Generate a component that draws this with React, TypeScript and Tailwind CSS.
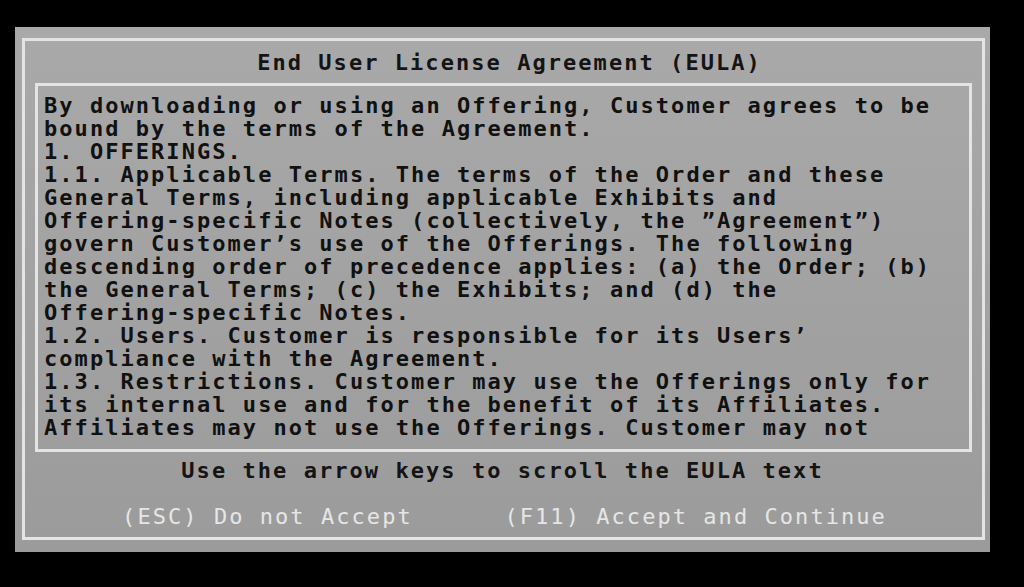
const LINES = [
  "By downloading or using an Offering, Customer agrees to be",
  "bound by the terms of the Agreement.",
  "1. OFFERINGS.",
  "1.1. Applicable Terms. The terms of the Order and these",
  "General Terms, including applicable Exhibits and",
  "Offering-specific Notes (collectively, the \u201dAgreement\u201d)",
  "govern Customer\u2019s use of the Offerings. The following",
  "descending order of precedence applies: (a) the Order; (b)",
  "the General Terms; (c) the Exhibits; and (d) the",
  "Offering-specific Notes.",
  "1.2. Users. Customer is responsible for its Users\u2019",
  "compliance with the Agreement.",
  "1.3. Restrictions. Customer may use the Offerings only for",
  "its internal use and for the benefit of its Affiliates.",
  "Affiliates may not use the Offerings. Customer may not",
];

export default function App() {
  return (
    <div
      className="w-[1024px] h-[587px] bg-black pt-[27px] pl-[15px] overflow-hidden text-[22px] leading-[23px] tracking-[2.05px]"
      style={{ fontFamily: '"DejaVu Sans Mono", "Liberation Mono", monospace' }}
    >
      {/* gray dialog panel */}
      <div className="w-[975px] h-[525px] bg-gradient-to-b from-[#a9a9a9] to-[#9b9b9b] pt-[11px] pl-[7px] pr-[5px]">
        <div className="h-[502px] border-[3px] border-[#e4e4e4] flex flex-col px-[10px]">
          <div className="h-[42px] flex items-center justify-center pl-[12px] text-[#141414] font-bold">
            End User License Agreement (EULA)
          </div>

          {/* EULA text box */}
          <div className="h-[369px] border-[3px] border-[#e4e4e4] pt-[8px] pl-[6px] text-[#111] font-bold">
            {LINES.map((l, i) => (
              <div key={i} className="whitespace-pre">
                {l}
              </div>
            ))}
          </div>

          <div className="mt-[7px] text-center pr-[2px] text-[#141414] font-bold">
            Use the arrow keys to scroll the EULA text
          </div>
          <div className="mt-[23px] text-center pl-[2px] text-[#e6e6e6] whitespace-pre">
            {"(ESC) Do not Accept      (F11) Accept and Continue"}
          </div>
        </div>
      </div>
    </div>
  );
}
